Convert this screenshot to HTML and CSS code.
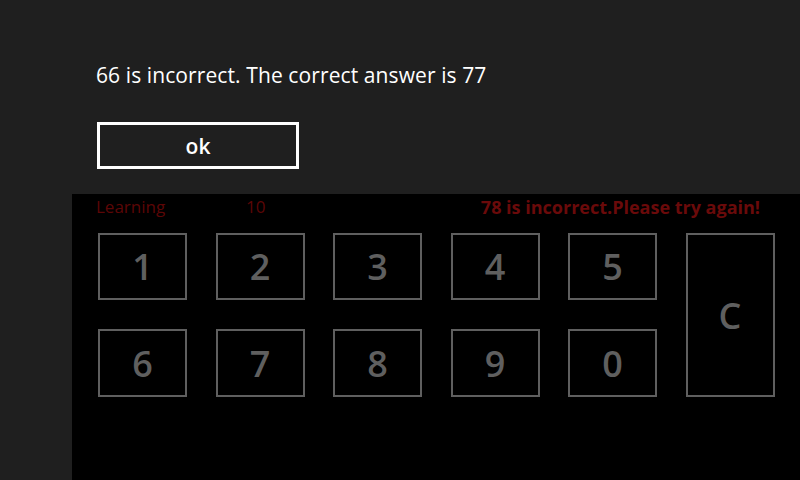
FILE: index.html
```html
<!DOCTYPE html>
<html lang="en">
<head>
  <meta charset="UTF-8" />
  <title>Math Quiz</title>
  <link rel="stylesheet" href="styles.css">
</head>
<body>

  <div class="dialog">
    <p class="dialog-text">66 is incorrect. The correct answer is 77</p>
    <button class="ok-btn">ok</button>
  </div>

  <div class="main">
    <div class="status-row">
      <span class="mode">Learning</span>
      <span class="score">10</span>
      <span class="message">78 is incorrect.Please try again!</span>
    </div>

    <div class="keypad">
      <button class="key">1</button>
      <button class="key">2</button>
      <button class="key">3</button>
      <button class="key">4</button>
      <button class="key">5</button>
      <button class="key key-clear">C</button>
      <button class="key">6</button>
      <button class="key">7</button>
      <button class="key">8</button>
      <button class="key">9</button>
      <button class="key">0</button>
    </div>
  </div>

</body>
</html>
```

FILE: styles.css
```css
/* Base Reset */
* {
  margin: 0;
  padding: 0;
  box-sizing: border-box;
  font-family: 'Open Sans', 'Noto Sans', sans-serif;
}

body {
  width: 800px;
  height: 480px;
  background: #1f1f1f;
  overflow: hidden;
}

/* Message Dialog */
.dialog {
  height: 194px;
  padding: 61px 0 0 96px;
}

.dialog-text {
  color: #ffffff;
  font-size: 21px;
  letter-spacing: 0.1px;
  line-height: 28px;
}

.ok-btn {
  display: block;
  margin-top: 33px;
  margin-left: 1px;
  width: 202px;
  height: 47px;
  background: transparent;
  border: 3px solid #ffffff;
  color: #ffffff;
  font-size: 21px;
  font-weight: 600;
}

/* Quiz Area */
.main {
  margin-left: 72px;
  height: 286px;
  background: #000000;
  padding: 0 40px 0 24px;
}

.status-row {
  display: flex;
  align-items: center;
  height: 25px;
  font-size: 17px;
  color: #5c0606;
}

.mode {
  width: 150px;
}

.message {
  margin-left: auto;
  font-size: 18px;
  font-weight: 700;
  color: #6a0a0a;
}

/* Number Keys */
.keypad {
  display: grid;
  grid-template-columns: repeat(6, 89px);
  grid-template-rows: 67px 68px;
  column-gap: 28.5px;
  row-gap: 29px;
  margin-top: 14px;
  margin-left: 2px;
}

.key {
  background: transparent;
  border: 2px solid #5f5f5f;
  color: #5f5f5f;
  font-size: 36px;
  font-weight: 600;
}

.key-clear {
  grid-column: 6;
  grid-row: 1 / span 2;
}
```
